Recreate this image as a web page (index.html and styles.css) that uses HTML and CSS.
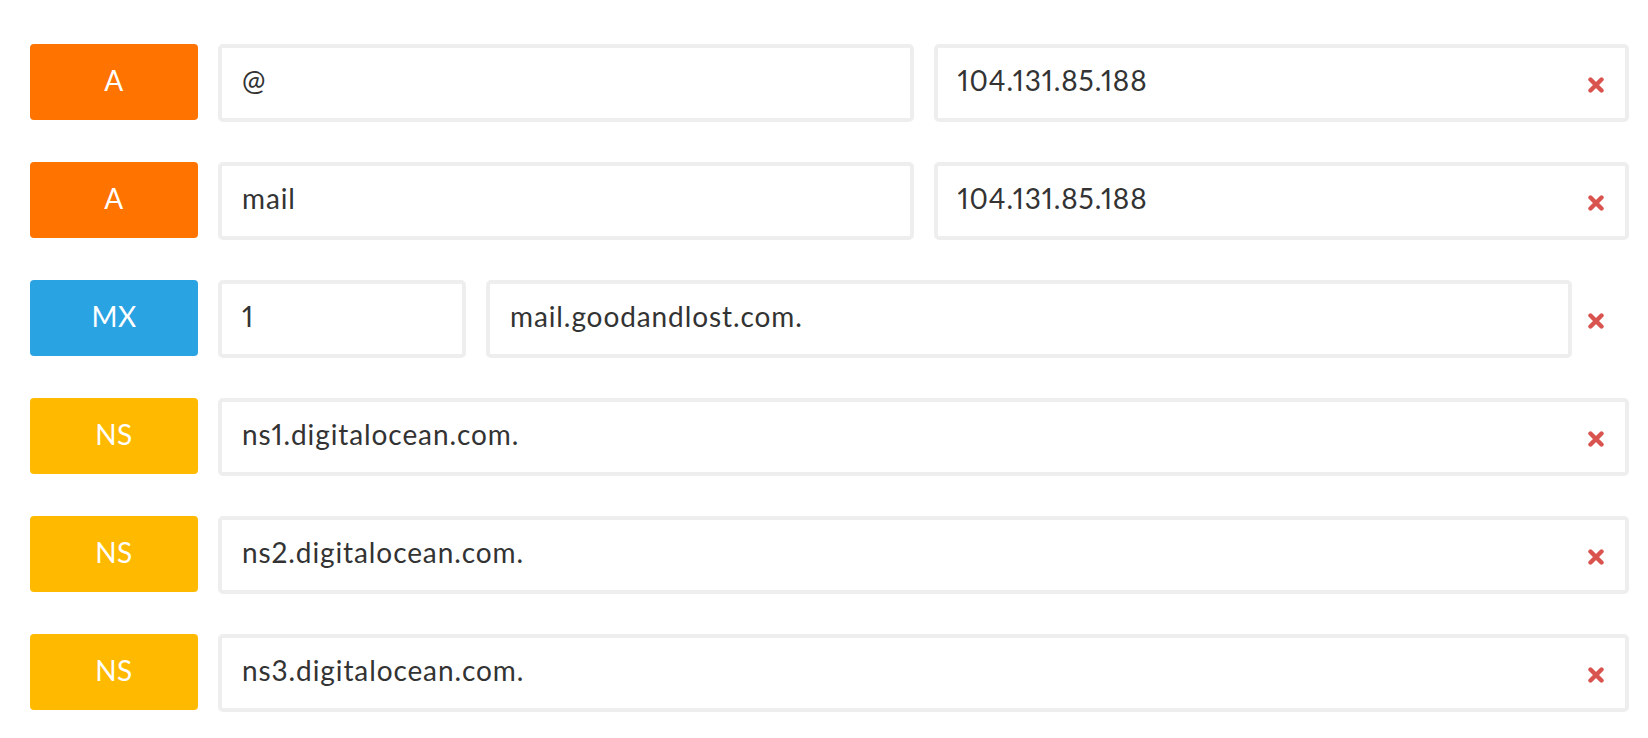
FILE: index.html
```html
<!DOCTYPE html>
<html lang="en">
<head>
<meta charset="utf-8">
<title>DNS records</title>
<link rel="stylesheet" href="styles.css">
</head>
<body>
<div class="records">
  <div class="record">
    <div class="type type-a">A</div>
    <input class="field" value="@">
    <input class="field" value="104.131.85.188">
    <span class="delete"><svg viewBox="0 0 16 16" width="16" height="16"><path d="M2.5 2.5L13.5 13.5M13.5 2.5L2.5 13.5"/></svg></span>
  </div>
  <div class="record">
    <div class="type type-a">A</div>
    <input class="field" value="mail">
    <input class="field" value="104.131.85.188">
    <span class="delete"><svg viewBox="0 0 16 16" width="16" height="16"><path d="M2.5 2.5L13.5 13.5M13.5 2.5L2.5 13.5"/></svg></span>
  </div>
  <div class="record">
    <div class="type type-mx">MX</div>
    <input class="field field-priority" value="1">
    <input class="field field-outside" value="mail.goodandlost.com.">
    <span class="delete"><svg viewBox="0 0 16 16" width="16" height="16"><path d="M2.5 2.5L13.5 13.5M13.5 2.5L2.5 13.5"/></svg></span>
  </div>
  <div class="record">
    <div class="type type-ns">NS</div>
    <input class="field" value="ns1.digitalocean.com.">
    <span class="delete"><svg viewBox="0 0 16 16" width="16" height="16"><path d="M2.5 2.5L13.5 13.5M13.5 2.5L2.5 13.5"/></svg></span>
  </div>
  <div class="record">
    <div class="type type-ns">NS</div>
    <input class="field" value="ns2.digitalocean.com.">
    <span class="delete"><svg viewBox="0 0 16 16" width="16" height="16"><path d="M2.5 2.5L13.5 13.5M13.5 2.5L2.5 13.5"/></svg></span>
  </div>
  <div class="record">
    <div class="type type-ns">NS</div>
    <input class="field" value="ns3.digitalocean.com.">
    <span class="delete"><svg viewBox="0 0 16 16" width="16" height="16"><path d="M2.5 2.5L13.5 13.5M13.5 2.5L2.5 13.5"/></svg></span>
  </div>
</div>
</body>
</html>
```
FILE: styles.css
```css
html, body {
  margin: 0;
  padding: 0;
  background: #ffffff;
}
body {
  font-family: "Lato", "Liberation Sans", sans-serif;
  color: #333333;
}
.records {
  padding: 44px 19px 0 30px;
  display: flex;
  flex-direction: column;
  gap: 40px;
}
.record {
  position: relative;
  display: flex;
  align-items: flex-start;
  gap: 20px;
}
.type {
  flex: 0 0 168px;
  box-sizing: border-box;
  height: 76px;
  padding-bottom: 4px;
  border-radius: 4px;
  color: #ffffff;
  font-size: 28px;
  letter-spacing: 0.5px;
  display: flex;
  align-items: center;
  justify-content: center;
}
.type-a { background: #ff7300; }
.type-mx { background: #2aa3e3; }
.type-ns { background: #ffba00; }
.field {
  flex: 1 1 0;
  min-width: 0;
  box-sizing: border-box;
  height: 78px;
  margin: 0;
  border: 4px solid #eeeeee;
  border-radius: 5px;
  background: #ffffff;
  padding: 0 20px 6px 20px;
  font-family: "Lato", "Liberation Sans", sans-serif;
  font-size: 28px;
  letter-spacing: 0.9px;
  font-variant-numeric: proportional-nums;
  color: #333333;
  outline: none;
}
.field-priority {
  flex: 0 0 248px;
}
.field-outside {
  margin-right: 57px;
}
.delete {
  position: absolute;
  right: 25px;
  top: 33px;
  width: 16px;
  height: 16px;
  display: block;
}
.delete svg {
  display: block;
  fill: none;
  stroke: #d9534f;
  stroke-width: 4.4;
  stroke-linecap: round;
}
```
